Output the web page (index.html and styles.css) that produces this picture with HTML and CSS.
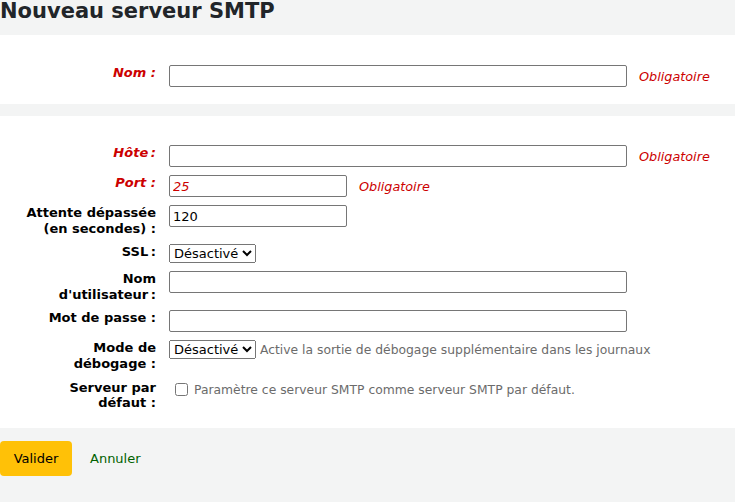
FILE: index.html
```html
<!DOCTYPE html>
<html lang="fr">
<head>
<meta charset="utf-8">
<title>Nouveau serveur SMTP</title>
<link rel="stylesheet" href="styles.css">
</head>
<body>
<h1 class="page-title">Nouveau serveur SMTP</h1>
<form class="smtp-form">
  <div class="panel panel-first">
    <div class="row">
      <label class="lbl lbl-required" for="name">Nom :</label>
      <div class="field">
        <input class="text text-wide" id="name" type="text">
        <span class="req-note">Obligatoire</span>
      </div>
    </div>
  </div>

  <div class="panel">
    <div class="row">
      <label class="lbl lbl-required" for="host">Hôte&#8239;:</label>
      <div class="field">
        <input class="text text-wide" id="host" type="text">
        <span class="req-note">Obligatoire</span>
      </div>
    </div>
    <div class="row">
      <label class="lbl lbl-required" for="port">Port :</label>
      <div class="field">
        <input class="text text-short text-required" id="port" type="text" value="25">
        <span class="req-note">Obligatoire</span>
      </div>
    </div>
    <div class="row">
      <label class="lbl" for="timeout">Attente dépassée (en secondes) :</label>
      <div class="field">
        <input class="text text-short" id="timeout" type="text" value="120">
      </div>
    </div>
    <div class="row">
      <label class="lbl" for="ssl">SSL&#8239;:</label>
      <div class="field">
        <select class="sel" id="ssl"><option>Désactivé</option></select>
      </div>
    </div>
    <div class="row">
      <label class="lbl" for="user">Nom d'utilisateur&#8239;:</label>
      <div class="field">
        <input class="text text-wide" id="user" type="text">
      </div>
    </div>
    <div class="row">
      <label class="lbl" for="pass">Mot de passe :</label>
      <div class="field">
        <input class="text text-wide" id="pass" type="password">
      </div>
    </div>
    <div class="row">
      <label class="lbl" for="debug">Mode de débogage :</label>
      <div class="field field-tight">
        <select class="sel" id="debug"><option>Désactivé</option></select>
        <span class="hint">Active la sortie de débogage supplémentaire dans les journaux</span>
      </div>
    </div>
    <div class="row">
      <label class="lbl" for="default">Serveur par défaut :</label>
      <div class="field field-check">
        <input class="check" id="default" type="checkbox">
        <span class="hint">Paramètre ce serveur SMTP comme serveur SMTP par défaut.</span>
      </div>
    </div>
  </div>

  <div class="actions">
    <button class="btn-submit" type="button">Valider</button>
    <a class="cancel" href="#">Annuler</a>
  </div>
</form>
</body>
</html>
```
FILE: styles.css
```css
html, body {
  margin: 0;
  padding: 0;
}
body {
  background: #f3f4f4;
  font-family: "DejaVu Sans", "Noto Sans", sans-serif;
  font-size: 13px;
  color: #000;
  min-height: 502px;
}
.page-title {
  margin: 0 0 12px 0;
  font-size: 21px;
  line-height: 23px;
  font-weight: bold;
  color: #212529;
}
.smtp-form {
  margin: 0;
}
.panel {
  background: #fff;
  padding: 29px 0 9px 0;
  margin-bottom: 12px;
}
.panel-first {
  padding-top: 30px;
}
.row {
  display: flex;
  align-items: flex-start;
  margin-bottom: 8px;
}
.lbl {
  flex: 0 0 130px;
  width: 130px;
  margin-left: 26px;
  margin-right: 13px;
  text-align: right;
  font-weight: bold;
  line-height: 15.6px;
  color: #000;
}
.lbl-required {
  color: #cc0000;
  font-style: italic;
}
.field {
  display: flex;
  align-items: center;
  gap: 12px;
}
.field-tight {
  gap: 4px;
}
.field-check {
  gap: 0;
  height: 20px;
}
.text {
  box-sizing: border-box;
  height: 22px;
  margin: 0;
  padding: 1px 3px;
  border: 1px solid #767676;
  border-radius: 2px;
  font-family: "DejaVu Sans", sans-serif;
  font-size: 13px;
  color: #000;
  background: #fff;
}
.text-wide {
  width: 458px;
}
.text-short {
  width: 178px;
}
.text-required {
  color: #cc0000;
  font-style: italic;
}
.req-note {
  color: #cc0000;
  font-style: italic;
  font-size: 12.8px;
}
.sel {
  height: 19px;
  margin: 0;
  font-family: "DejaVu Sans", sans-serif;
  font-size: 13px;
  color: #000;
}
.hint {
  color: #6b6b6b;
  font-size: 12.35px;
}
.check {
  width: 13px;
  height: 13px;
  margin: 0 6px 0 6px;
}
.actions {
  padding: 1px 0 0 0;
  display: flex;
  align-items: center;
}
.btn-submit {
  box-sizing: border-box;
  width: 72px;
  height: 35px;
  border: 0;
  border-radius: 4px;
  background: #ffc107;
  color: #000;
  font-family: "DejaVu Sans", sans-serif;
  font-size: 13px;
  padding: 0;
}
.cancel {
  margin-left: 18px;
  color: #006100;
  text-decoration: none;
  font-size: 13px;
}
```
